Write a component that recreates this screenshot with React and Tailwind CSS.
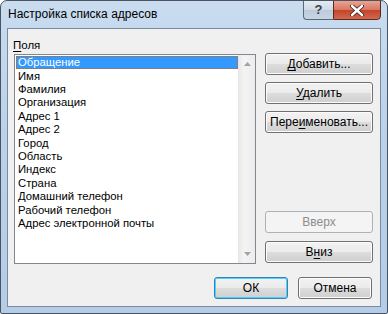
import React from "react";

const fields = [
  "Обращение",
  "Имя",
  "Фамилия",
  "Организация",
  "Адрес 1",
  "Адрес 2",
  "Город",
  "Область",
  "Индекс",
  "Страна",
  "Домашний телефон",
  "Рабочий телефон",
  "Адрес электронной почты",
];

const font = { fontFamily: '"Liberation Sans", Arial, sans-serif' };

function Btn({ children, disabled, primary, className = "" }) {
  const base =
    "h-[22px] flex items-center justify-center rounded-[3px] border text-[12px] " + className;
  if (disabled) {
    return (
      <div className={base + " border-[#adb2b5] bg-[#f4f4f4] text-[#8d8d8d]"}>
        {children}
      </div>
    );
  }
  return (
    <div
      className={
        base +
        (primary
          ? " border-[#3c7fb1] shadow-[inset_0_0_0_1px_#48d3ff]"
          : " border-[#707070] shadow-[inset_0_0_0_1px_#fcfcfc]") +
        " bg-[linear-gradient(#f2f2f2_0%,#ebebeb_50%,#dddddd_50%,#cfcfcf_100%)] text-black"
      }
    >
      {children}
    </div>
  );
}

export default function App() {
  return (
    <div
      style={font}
      className="w-[388px] h-[314px] flex flex-col border border-[#4a5461] rounded-t-[7px] rounded-b-[2px] bg-[linear-gradient(180deg,#c9dcf0_0%,#bcd2ea_40%,#b4cce6_100%)] overflow-hidden"
    >
      {/* title bar */}
      <div className="h-[27px] flex items-start shrink-0">
        <div className="pl-[7px] pt-[6px] text-[12px] text-black leading-[15px]">
          Настройка списка адресов
        </div>
        <div className="ml-auto mr-[6px] flex -mt-px">
          <div className="w-[30px] h-[20px] flex items-center justify-center border border-[#59687a] border-r-0 rounded-bl-[4px] bg-[linear-gradient(#e3eaf2_0%,#cfd9e5_50%,#bccbdb_50%,#c7d5e3_100%)] text-[#39414b] text-[13px] font-bold">
            ?
          </div>
          <div className="w-[48px] h-[20px] flex items-center justify-center border border-[#5a2a22] rounded-br-[4px] bg-[linear-gradient(#e8a493_0%,#d9765f_50%,#c2432a_50%,#d2694f_100%)]">
            <svg width="14" height="11" viewBox="0 0 14 11">
              <path
                d="M2 1 L12 10 M12 1 L2 10"
                stroke="#3b1a14"
                strokeWidth="4"
                strokeLinecap="round"
              />
              <path
                d="M2 1 L12 10 M12 1 L2 10"
                stroke="#ffffff"
                strokeWidth="2.4"
                strokeLinecap="round"
              />
            </svg>
          </div>
        </div>
      </div>

      {/* client area */}
      <div className="mx-[6px] mb-[6px] flex-1 flex flex-col border border-[#7a8ba0] bg-[#f0f0f0]">
        <div className="flex pt-[9px] pl-[6px]">
          <div className="flex flex-col">
            <div className="h-[16px] -ml-px text-[11.5px] leading-[14px] text-black">
              <span className="underline underline-offset-2">П</span>оля
            </div>
            <div className="w-[242px] h-[210px] border border-[#828790] bg-white flex">
              <div className="flex-1 pt-px pl-px">
                {fields.map((f, i) =>
                  i === 0 ? (
                    <div
                      key={f}
                      className="h-[13.4px] flex items-center pl-[2px] bg-[#3399ff] text-white text-[11.3px] outline-1 outline-dotted outline-[#cc6600] -outline-offset-1"
                    >
                      {f}
                    </div>
                  ) : (
                    <div
                      key={f}
                      className="h-[13.4px] flex items-center pl-[2px] text-black text-[11.3px]"
                    >
                      {f}
                    </div>
                  )
                )}
              </div>
              <div className="w-[17px] flex flex-col items-center justify-between py-[7px] border-l border-[#e6e6e6] bg-[linear-gradient(90deg,#e9e9e9_0%,#f4f4f4_30%,#ececec_100%)]">
                <svg width="7" height="4" viewBox="0 0 7 4">
                  <path d="M3.5 0 L7 4 L0 4 Z" fill="#a3a3a3" />
                </svg>
                <svg width="7" height="4" viewBox="0 0 7 4">
                  <path d="M0 0 L7 0 L3.5 4 Z" fill="#a3a3a3" />
                </svg>
              </div>
            </div>
          </div>

          <div className="ml-[9px] w-[108px] flex flex-col pt-[15px]">
            <div className="flex flex-col gap-[7px]">
              <Btn>
                <span>
                  <span className="underline underline-offset-2">Д</span>обавить...
                </span>
              </Btn>
              <Btn>
                <span>
                  <span className="underline underline-offset-2">У</span>далить
                </span>
              </Btn>
              <Btn>
                <span>
                  Пере<span className="underline underline-offset-2">и</span>меновать...
                </span>
              </Btn>
            </div>
            <div className="mt-auto flex flex-col gap-[8px] mb-px">
              <Btn disabled>Вверх</Btn>
              <Btn>
                <span>
                  В<span className="underline underline-offset-2">н</span>из
                </span>
              </Btn>
            </div>
          </div>
        </div>

        <div className="flex justify-end gap-[10px] pr-[8px] mt-auto mb-[7px]">
          <Btn primary className="w-[74px]">
            ОК
          </Btn>
          <Btn className="w-[74px]">Отмена</Btn>
        </div>
      </div>
    </div>
  );
}
